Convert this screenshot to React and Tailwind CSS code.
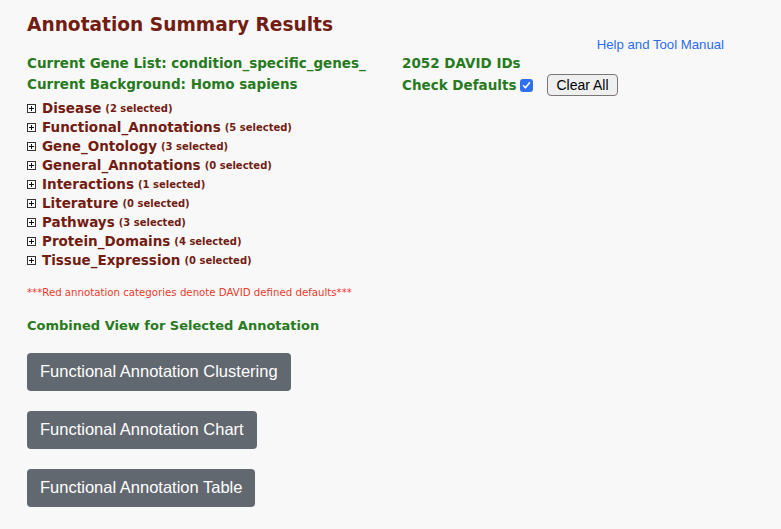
import React from 'react';

const categories = [
  ['Disease', 2],
  ['Functional_Annotations', 5],
  ['Gene_Ontology', 3],
  ['General_Annotations', 0],
  ['Interactions', 1],
  ['Literature', 0],
  ['Pathways', 3],
  ['Protein_Domains', 4],
  ['Tissue_Expression', 0],
];

const PlusBox = () => (
  <svg width="9" height="9" viewBox="0 0 9 9" className="shrink-0">
    <rect x="0.5" y="0.5" width="8" height="8" fill="#fff" stroke="#333" />
    <path d="M2 4.5h5M4.5 2v5" stroke="#111" strokeWidth="1" />
  </svg>
);

const verdana = { fontFamily: '"DejaVu Sans", Verdana, sans-serif' };

export default function App() {
  return (
    <div className="min-h-screen w-full bg-[#f8f8f8] px-[27px] pt-[13px] pb-6" style={verdana}>
      {/* header */}
      <h1 className="text-[18.6px] leading-[24px] font-bold text-[#731c12]">Annotation Summary Results</h1>

      <div className="flex justify-end pr-[30px]">
        <a
          href="#"
          className="text-[13.2px] leading-[16px] text-[#2b6cf4]"
          style={{ fontFamily: '"Liberation Sans", Arial, sans-serif' }}
        >
          Help and Tool Manual
        </a>
      </div>

      <div className="grid grid-cols-[375px_1fr] text-[13.5px] font-bold text-[#277a1d] leading-[21px]">
        <div>Current Gene List: condition_specific_genes_</div>
        <div>2052 DAVID IDs</div>
        <div>Current Background: Homo sapiens</div>
        <div className="flex items-center">
          <span>Check Defaults</span>
          <span className="ml-[4px] w-[13px] h-[13px] rounded-[3px] bg-[#2f6ff3] flex items-center justify-center">
            <svg width="9" height="9" viewBox="0 0 9 9">
              <path d="M1.5 4.8l2 2 4-5" stroke="#fff" strokeWidth="1.6" fill="none" strokeLinecap="round" strokeLinejoin="round" />
            </svg>
          </span>
          <button
            className="ml-[14px] h-[22px] px-[8px] border border-[#777] rounded-[4px] bg-[#efefef] text-[14px] font-normal text-black leading-none"
            style={{ fontFamily: '"Liberation Sans", Arial, sans-serif' }}
          >
            Clear All
          </button>
        </div>
      </div>

      {/* categories */}
      <div className="mt-[3px] flex flex-col">
        {categories.map(([name, n]) => (
          <div key={name} className="flex items-center h-[19px] gap-[6px] text-[#731c12] font-bold">
            <PlusBox />
            <span className="text-[13.5px]">{name}</span>
            <span className="text-[10px] -ml-[2px]">({n} selected)</span>
          </div>
        ))}
      </div>

      <p className="mt-[15px] text-[10.2px] text-[#ea3a2c]">***Red annotation categories denote DAVID defined defaults***</p>

      <h2 className="mt-[16px] text-[13px] font-bold text-[#277a1d]">Combined View for Selected Annotation</h2>

      <div
        className="mt-[17px] flex flex-col items-start gap-[20px]"
        style={{ fontFamily: '"Liberation Sans", Arial, sans-serif' }}
      >
        {['Functional Annotation Clustering', 'Functional Annotation Chart', 'Functional Annotation Table'].map((t) => (
          <button key={t} className="h-[38px] px-[13px] rounded-[4px] bg-[#626870] text-white text-[16.5px]">
            {t}
          </button>
        ))}
      </div>
    </div>
  );
}
